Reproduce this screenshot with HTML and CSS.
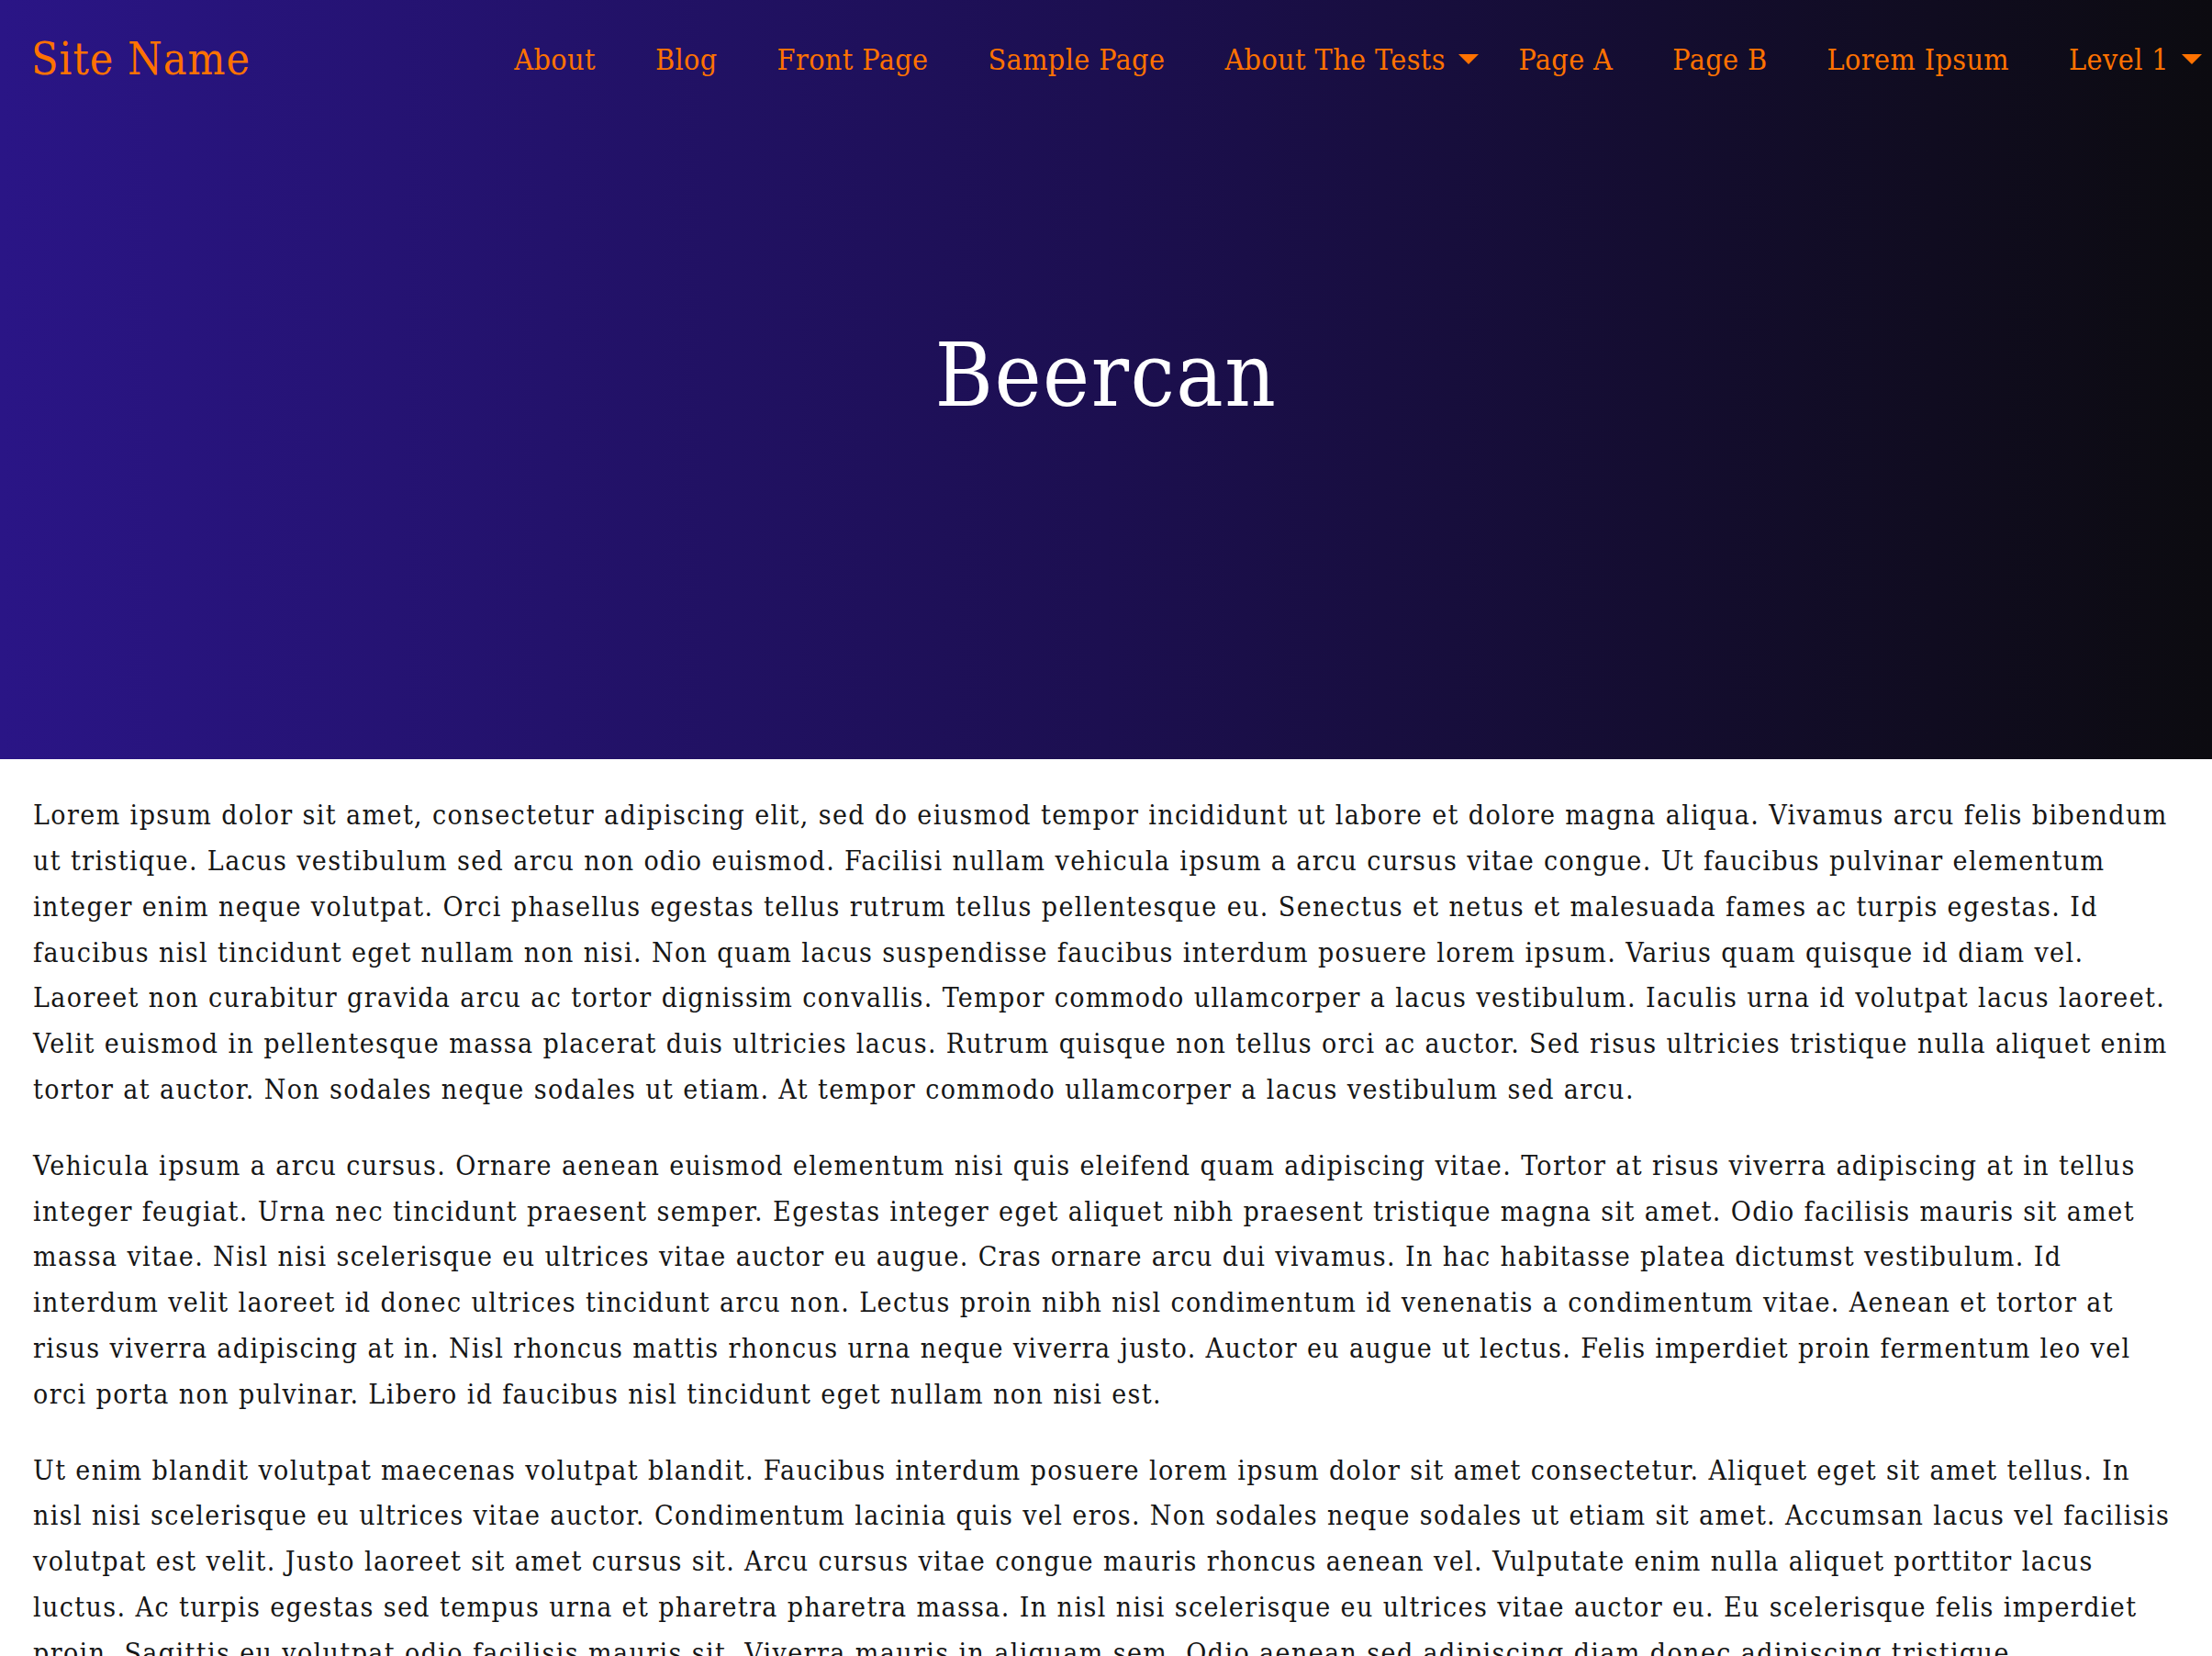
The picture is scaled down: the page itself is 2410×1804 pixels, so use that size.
FILE: index.html
```html
<!DOCTYPE html>
<html lang="en">
<head>
<meta charset="utf-8">
<title>Beercan</title>
<link rel="stylesheet" href="styles.css">
</head>
<body>
<div class="hero">
  <header class="site-header">
    <a class="site-name" href="#">Site Name</a>
    <nav class="main-nav">
      <ul class="menu">
        <li class="menu-item"><a href="#">About</a></li>
        <li class="menu-item"><a href="#">Blog</a></li>
        <li class="menu-item"><a href="#">Front Page</a></li>
        <li class="menu-item"><a href="#">Sample Page</a></li>
        <li class="menu-item has-children"><a href="#">About The Tests</a><span class="caret"></span></li>
        <li class="menu-item"><a href="#">Page A</a></li>
        <li class="menu-item"><a href="#">Page B</a></li>
        <li class="menu-item"><a href="#">Lorem Ipsum</a></li>
        <li class="menu-item has-children"><a href="#">Level 1</a><span class="caret"></span></li>
      </ul>
    </nav>
  </header>
  <h1 class="page-title">Beercan</h1>
</div>
<main class="content">
  <p>Lorem ipsum dolor sit amet, consectetur adipiscing elit, sed do eiusmod tempor incididunt ut labore et dolore magna aliqua. Vivamus arcu felis bibendum ut tristique. Lacus vestibulum sed arcu non odio euismod. Facilisi nullam vehicula ipsum a arcu cursus vitae congue. Ut faucibus pulvinar elementum integer enim neque volutpat. Orci phasellus egestas tellus rutrum tellus pellentesque eu. Senectus et netus et malesuada fames ac turpis egestas. Id faucibus nisl tincidunt eget nullam non nisi. Non quam lacus suspendisse faucibus interdum posuere lorem ipsum. Varius quam quisque id diam vel. Laoreet non curabitur gravida arcu ac tortor dignissim convallis. Tempor commodo ullamcorper a lacus vestibulum. Iaculis urna id volutpat lacus laoreet. Velit euismod in pellentesque massa placerat duis ultricies lacus. Rutrum quisque non tellus orci ac auctor. Sed risus ultricies tristique nulla aliquet enim tortor at auctor. Non sodales neque sodales ut etiam. At tempor commodo ullamcorper a lacus vestibulum sed arcu.</p>
  <p>Vehicula ipsum a arcu cursus. Ornare aenean euismod elementum nisi quis eleifend quam adipiscing vitae. Tortor at risus viverra adipiscing at in tellus integer feugiat. Urna nec tincidunt praesent semper. Egestas integer eget aliquet nibh praesent tristique magna sit amet. Odio facilisis mauris sit amet massa vitae. Nisl nisi scelerisque eu ultrices vitae auctor eu augue. Cras ornare arcu dui vivamus. In hac habitasse platea dictumst vestibulum. Id interdum velit laoreet id donec ultrices tincidunt arcu non. Lectus proin nibh nisl condimentum id venenatis a condimentum vitae. Aenean et tortor at risus viverra adipiscing at in. Nisl rhoncus mattis rhoncus urna neque viverra justo. Auctor eu augue ut lectus. Felis imperdiet proin fermentum leo vel orci porta non pulvinar. Libero id faucibus nisl tincidunt eget nullam non nisi est.</p>
  <p>Ut enim blandit volutpat maecenas volutpat blandit. Faucibus interdum posuere lorem ipsum dolor sit amet consectetur. Aliquet eget sit amet tellus. In nisl nisi scelerisque eu ultrices vitae auctor. Condimentum lacinia quis vel eros. Non sodales neque sodales ut etiam sit amet. Accumsan lacus vel facilisis volutpat est velit. Justo laoreet sit amet cursus sit. Arcu cursus vitae congue mauris rhoncus aenean vel. Vulputate enim nulla aliquet porttitor lacus luctus. Ac turpis egestas sed tempus urna et pharetra pharetra massa. In nisl nisi scelerisque eu ultrices vitae auctor eu. Eu scelerisque felis imperdiet proin. Sagittis eu volutpat odio facilisis mauris sit. Viverra mauris in aliquam sem. Odio aenean sed adipiscing diam donec adipiscing tristique pellentesque habitant morbi tristique senectus et netus.</p>
</main>
</body>
</html>
```
FILE: styles.css
```css
html, body {
  margin: 0;
  padding: 0;
}

body {
  font-family: "DejaVu Serif Condensed", "DejaVu Serif", "Liberation Serif", serif;
  font-stretch: condensed;
  background: #ffffff;
  color: #161616;
}

.hero {
  background: linear-gradient(90deg, #2a1586 0%, #1c0f50 50%, #0c0b10 100%);
  padding-bottom: 360px;
}

.site-header {
  display: flex;
  justify-content: space-between;
  align-items: center;
  height: 130px;
  padding-left: 34px;
}

.site-name {
  color: #ff7200;
  text-decoration: none;
  font-size: 48px;
  line-height: 1.2;
  letter-spacing: 1px;
}

.menu {
  display: flex;
  align-items: center;
  list-style: none;
  margin: 0;
  padding: 0;
}

.menu-item {
  display: flex;
  align-items: center;
  padding: 0 32.5px;
}

.menu-item.has-children {
  padding-right: 11px;
}

.menu-item a {
  color: #ff7200;
  text-decoration: none;
  font-size: 32px;
  line-height: 1.2;
  letter-spacing: 0.4px;
}

.caret {
  width: 0;
  height: 0;
  margin-left: 14px;
  border-left: 11.5px solid transparent;
  border-right: 11.5px solid transparent;
  border-top: 11px solid #ff7200;
}

.page-title {
  margin: 222px 0 0;
  text-align: center;
  color: #ffffff;
  font-size: 96px;
  font-weight: normal;
  line-height: 1.2;
  letter-spacing: 1.5px;
}

.content {
  padding: 36px 36px 40px;
}

.content p {
  margin: 0 0 33px;
  font-size: 30px;
  line-height: 1.66;
  letter-spacing: 1.4px;
}
```
